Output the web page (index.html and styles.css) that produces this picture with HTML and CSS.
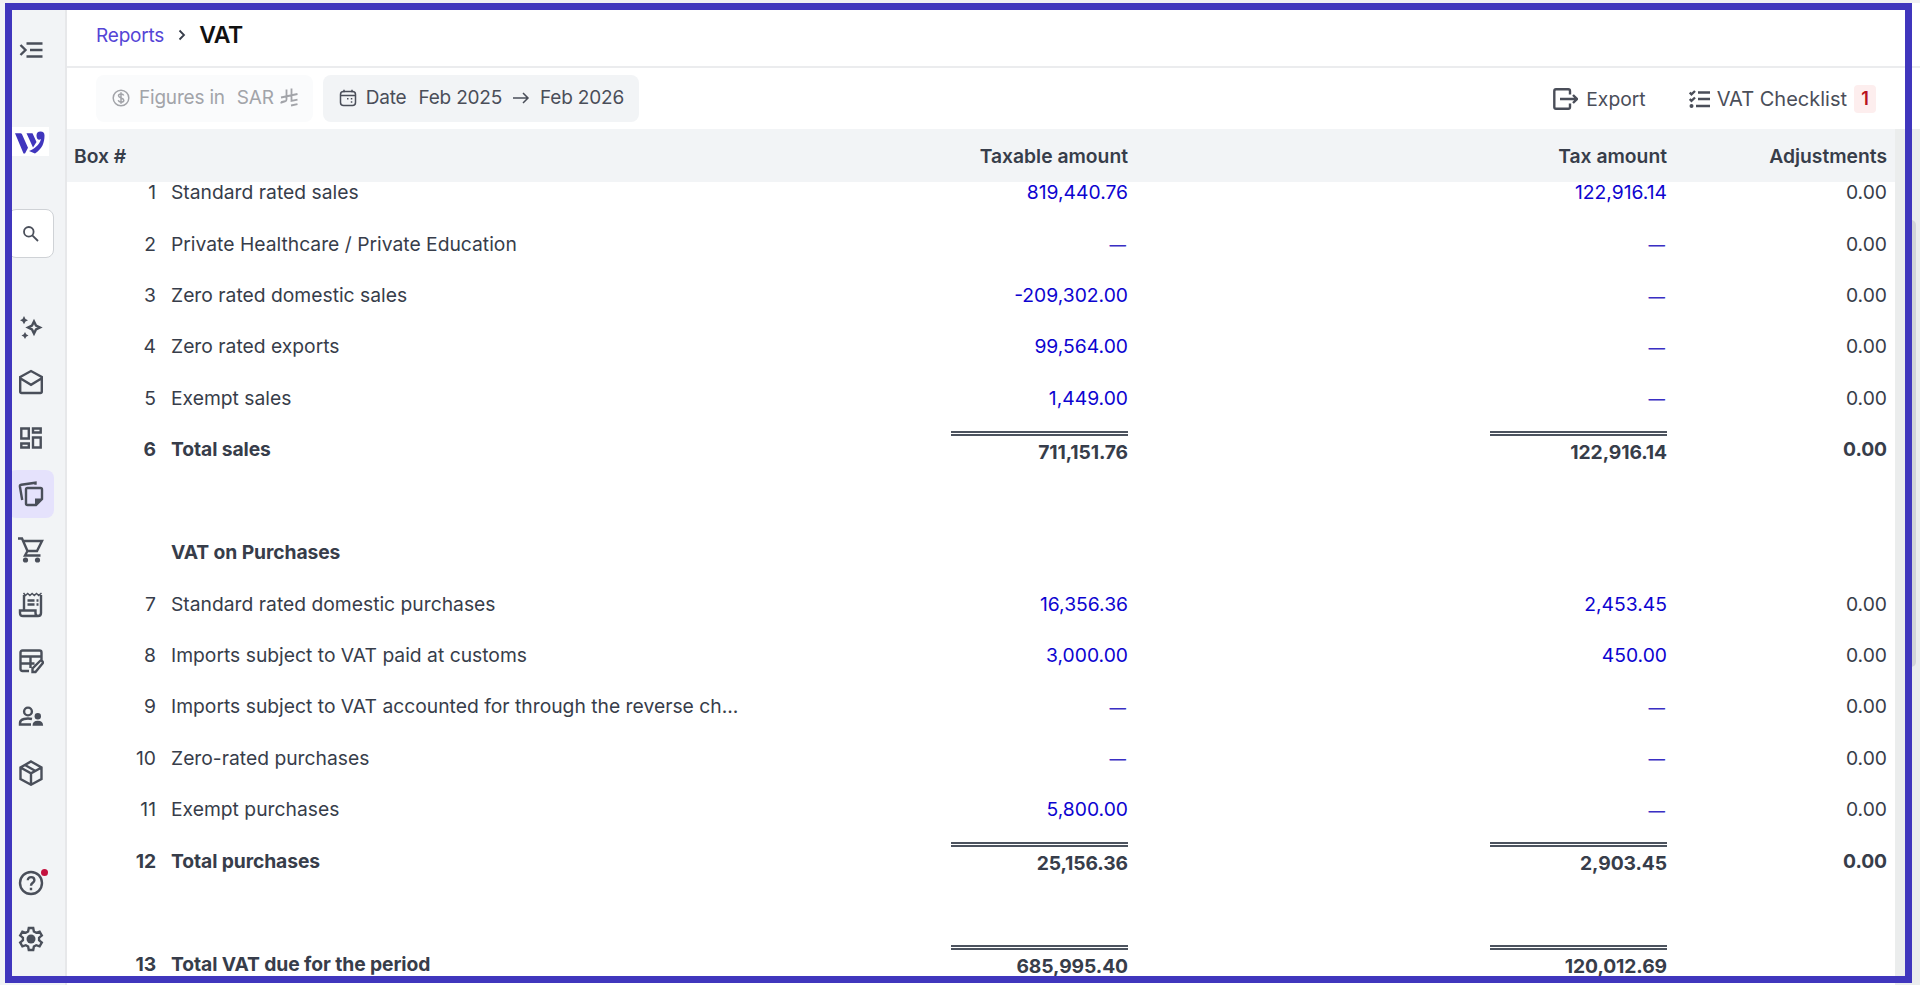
FILE: index.html
```html
<!DOCTYPE html>
<html lang="en">
<head>
  <meta charset="UTF-8">
  <title>VAT - Reports</title>
  <meta name="viewport" content="width=device-width, initial-scale=1">
  <link rel="stylesheet" href="styles.css">
</head>
<body>

  <div class="app">
    <nav class="sidebar">
      <a class="nav-item toggle">
        <svg width="24" height="24" viewBox="0 0 24 24"><path d="M1.500 7l5 5-5 5M7.500 5.500H23.500M11 12h12.500M7.500 18.500H23.500"/></svg>
      </a>
      <a class="nav-item logo">
        <svg width="30" height="23" viewBox="0 0 30 23"><path class="solid" d="M0 2.300h5.500q1 0 1.500 1l6 13.500-3 5.700H8.500zM11.500 2.300h6l4 8.700-3.500 5.500zM21.500 4.500a4 4 0 1 1 8 0C29.500 12 27 18 20 22.500L14 20c5-2 10.500-6 12-12-2 1.500-4.500.5-4.500-3.500z"/></svg>
      </a>
      <a class="nav-item search">
        <svg width="18" height="18" viewBox="0 0 18 18"><circle cx="6.800" cy="6.800" r="4.800"/><path d="M10.300 10.300l5.700 5.700"/></svg>
      </a>
      <div class="nav-main">
        <a class="nav-item">
          <svg width="24" height="24" viewBox="0 0 24 24"><path d="M15 6.500l2 4 4 2-4 2-2 4-2-4-4-2 4-2z"/><path class="solid" d="M5 1l1.500 3L9 5.200 6.500 6.500 5 9.200 3.500 6.500 1 5.200 3.500 4zM6 17l1.200 2.300 2.300 1.200-2.300 1.200L6 24l-1.200-2.300-2.300-1.200 2.300-1.200z"/></svg>
        </a>
        <a class="nav-item">
          <svg width="26" height="26" viewBox="0 0 26 26"><path d="M2.200 8L13 2l10.800 6v14.500q0 1.500-1.500 1.500h-18.600q-1.500 0-1.500-1.500zM2.200 9.300L13 15.800l10.800-6.500"/></svg>
        </a>
        <a class="nav-item">
          <svg width="24" height="24" viewBox="0 0 24 24"><path d="M2.300 2.500h7.500v10H2.300zM14 2.500h7.700v4H14zM14 11.500h7.700v10H14zM2.300 17.500h7.500v4H2.300z"/></svg>
        </a>
        <a class="nav-item active">
          <svg width="26" height="26" viewBox="0 0 26 26"><path d="M8 8.500Q8 7 9.500 7h13q1.500 0 1.500 1.500V18l-6 6H9.500Q8 24 8 22.500zM4.200 19L1.900 5.500Q1.700 4 3.200 3.700L17.500 1.700v2"/><path class="solid" d="M17 24.500v-7h7.500z"/></svg>
        </a>
        <a class="nav-item">
          <svg width="26" height="26" viewBox="0 0 26 26"><path d="M0 1.500h4l5.500 12.500h9.500l5-10H5M9.500 14L7 18.500h15.500"/><circle class="solid" cx="7.500" cy="23" r="2.600"/><circle class="solid" cx="19.500" cy="23" r="2.600"/></svg>
        </a>
        <a class="nav-item">
          <svg width="26" height="26" viewBox="0 0 26 26"><path d="M6 18V3M23 3v18q0 3-3 3H5q-3 0-3-3v-2.500h15.500V21q0 3 2.500 3M9.500 8.500h7M9.500 12.500h7M18.500 8.500h2M18.500 12.500h2"/><path stroke-width="1.500" d="M5.500 1l2 2.500 2.200-2 2.200 2 2.200-2 2.200 2 2.200-2 2.200 2 2.800-2.500"/></svg>
        </a>
        <a class="nav-item">
          <svg width="26" height="26" viewBox="0 0 26 26"><path d="M11 23H4.500q-2 0-2-2V4.500q0-2 2-2h17q2 0 2 2V12M2.500 8.500h21M2.500 15.500h14M12.500 8.500V20M14.500 24v-3.500l7.500-7.500q1-1 2.200.2t.3 2.300L17.500 24z"/></svg>
        </a>
        <a class="nav-item">
          <svg width="26" height="26" viewBox="0 0 26 26"><circle cx="10" cy="7.500" r="3.900"/><path d="M13 20.500H2V19q0-3 4-4t8 0"/><circle class="solid" cx="19.800" cy="12.300" r="3.200"/><path class="solid" d="M14.500 21.700q0-5 5.300-5t5.300 5z"/></svg>
        </a>
        <a class="nav-item">
          <svg width="26" height="26" viewBox="0 0 26 26"><path d="M13 1.500l10.500 6v11.500L13 24.700 2.500 19V7.500zM2.500 7.500L13 13.300l10.500-5.800M13 13v11.500M7 5l10.500 6"/></svg>
        </a>
      </div>
      <div class="nav-bottom">
        <a class="nav-item">
          <svg width="26" height="26" viewBox="0 0 26 26"><circle cx="13" cy="13" r="11"/><path d="M9.800 10.200c0-4.200 6.600-4 6.600 0 0 2.600-3.400 2.600-3.400 5.500M13 17.800v2.400"/></svg>
          <span class="dot"></span>
        </a>
        <a class="nav-item">
          <svg width="26" height="26" viewBox="0 0 26 26"><path d="M10.800 2h4.400l.7 3.500 2.300 1.300 3.400-1.200 2.200 3.800-2.700 2.300v2.600l2.700 2.300-2.200 3.800-3.400-1.200-2.300 1.300-.7 3.500h-4.400l-.7-3.500-2.300-1.300-3.400 1.200-2.200-3.800 2.700-2.300v-2.600L2.200 9.400l2.200-3.800 3.400 1.200 2.300-1.300z"/><circle class="solid" cx="13" cy="13" r="4.500"/></svg>
        </a>
      </div>
    </nav>

    <main>
      <header>
        <a class="crumb">Reports</a>
        <svg class="chevron" width="8" height="12" viewBox="0 0 8 12"><path d="M1.500 1.500L6 6l-4.500 4.500"/></svg>
        <h1>VAT</h1>
      </header>

      <div class="toolbar">
        <div class="chip disabled">
          <svg width="18" height="18" viewBox="0 0 18 18"><circle cx="9" cy="9" r="7.800"/><path d="M11.700 6.500C11 4.300 6.500 4.300 6.500 6.800S11.800 8.800 11.800 11.300 7 13.800 6.200 11.300M9 3.300v11.400"/></svg>
          <span>Figures in</span>
          <span class="value">SAR</span>
          <svg class="riyal" width="18" height="19" viewBox="0 0 18 19"><path d="M6.500 1.500V11.500q0 1.500-1.500 2L.5 15M11.500.5v12.500L17.500 11.700M1 9.500L17.500 6M1 14l4-1M11 17.500l6.500-1.400"/></svg>
        </div>
        <div class="chip">
          <svg width="18" height="18" viewBox="0 0 18 18"><rect x="1.500" y="2.500" width="15" height="14" rx="3"/><path d="M1.500 6.500h15M5 .8v2.500M13 .8v2.500"/><path class="solid" d="M8 9h1.500v1.500H8zM11.800 9h1.500v1.500h-1.500zM11.800 12.300h1.500v1.500h-1.500z"/></svg>
          <span>Date</span>
          <span class="value">Feb 2025</span>
          <svg class="arrow" width="18" height="14" viewBox="0 0 18 14"><path d="M1 7h15M11 2l5 5-5 5"/></svg>
          <span>Feb 2026</span>
        </div>
        <div class="actions">
          <a class="export">
            <svg width="25" height="22" viewBox="0 0 25 22"><path d="M17 6.500V3q0-1.700-1.700-1.700H3Q1.300 1.300 1.300 3v16q0 1.700 1.700 1.700h12.300q1.700 0 1.700-1.700v-3.500M7 11h16.500M20 7l4 4-4 4"/></svg>
            Export
          </a>
          <a class="checklist">
            <svg width="21" height="18" viewBox="0 0 21 18"><path d="M9 2.500h12M9 9h12M7 16h14M.7 2.500l1.800 1.800L6 1M.7 9l1.800 1.800L6 7.500"/><circle class="solid" cx="2.500" cy="16" r="2"/></svg>
            VAT Checklist
            <span class="badge">1</span>
          </a>
        </div>
      </div>

      <div class="report">
        <div class="table">
          <div class="row head">
            <span class="box">Box #</span><span class="name"></span><span class="amount">Taxable amount</span><span class="amount">Tax amount</span><span class="adj">Adjustments</span>
          </div>
          <div class="rows">
            <div class="row"><span class="box">1</span><span class="name">Standard rated sales</span><a class="amount">819,440.76</a><a class="amount">122,916.14</a><span class="adj">0.00</span></div>
            <div class="row"><span class="box">2</span><span class="name">Private Healthcare / Private Education</span><a class="amount nil">—</a><a class="amount nil">—</a><span class="adj">0.00</span></div>
            <div class="row"><span class="box">3</span><span class="name">Zero rated domestic sales</span><a class="amount">-209,302.00</a><a class="amount nil">—</a><span class="adj">0.00</span></div>
            <div class="row"><span class="box">4</span><span class="name">Zero rated exports</span><a class="amount">99,564.00</a><a class="amount nil">—</a><span class="adj">0.00</span></div>
            <div class="row"><span class="box">5</span><span class="name">Exempt sales</span><a class="amount">1,449.00</a><a class="amount nil">—</a><span class="adj">0.00</span></div>
            <div class="row total"><span class="box">6</span><span class="name">Total sales</span><span class="amount"><b>711,151.76</b></span><span class="amount"><b>122,916.14</b></span><span class="adj">0.00</span></div>
            <div class="row"></div>
            <div class="row total"><span class="box"></span><span class="name">VAT on Purchases</span></div>
            <div class="row"><span class="box">7</span><span class="name">Standard rated domestic purchases</span><a class="amount">16,356.36</a><a class="amount">2,453.45</a><span class="adj">0.00</span></div>
            <div class="row"><span class="box">8</span><span class="name">Imports subject to VAT paid at customs</span><a class="amount">3,000.00</a><a class="amount">450.00</a><span class="adj">0.00</span></div>
            <div class="row"><span class="box">9</span><span class="name">Imports subject to VAT accounted for through the reverse ch...</span><a class="amount nil">—</a><a class="amount nil">—</a><span class="adj">0.00</span></div>
            <div class="row"><span class="box">10</span><span class="name">Zero-rated purchases</span><a class="amount nil">—</a><a class="amount nil">—</a><span class="adj">0.00</span></div>
            <div class="row"><span class="box">11</span><span class="name">Exempt purchases</span><a class="amount">5,800.00</a><a class="amount nil">—</a><span class="adj">0.00</span></div>
            <div class="row total"><span class="box">12</span><span class="name">Total purchases</span><span class="amount"><b>25,156.36</b></span><span class="amount"><b>2,903.45</b></span><span class="adj">0.00</span></div>
            <div class="row"></div>
            <div class="row total"><span class="box">13</span><span class="name">Total VAT due for the period</span><span class="amount"><b>685,995.40</b></span><span class="amount"><b>120,012.69</b></span><span class="adj"></span></div>
          </div>
        </div>
        <div class="scrollbar"><div class="thumb"></div></div>
      </div>
    </main>
  </div>

  <div class="frame"></div>

</body>
</html>
```
FILE: styles.css
```css
* {
  box-sizing: border-box;
}

body {
  margin: 0;
  height: 985px;
  overflow: hidden;
  font-family: Inter, "Liberation Sans", sans-serif;
  font-size: 19.3px;
  color: #373d4a;
  background: #fff;
}

svg {
  flex: none;
  fill: none;
  stroke: currentColor;
  stroke-width: 2.4;
}

svg .solid {
  fill: currentColor;
  stroke: none;
}

.app {
  display: flex;
  height: 985px;
  border-top: 3px solid #f1f1f2;
}

/* sidebar */
.sidebar {
  width: 67px;
  flex: none;
  padding-left: 8px;
  background: #f2f4f6;
  border-right: 2px solid #e7e8ea;
  color: #4a4f5a;
  display: flex;
  flex-direction: column;
}

.nav-item {
  position: relative;
  width: 46px;
  height: 48px;
  display: flex;
  align-items: center;
  justify-content: center;
  border-radius: 8px;
}

.toggle {
  width: 45px;
  margin-top: 23px;
}

.logo {
  height: 29px;
  width: 41px;
  margin-top: 53px;
  padding: 2px 0 0 2px;
  background: #fff;
  border-radius: 0;
  color: #4036bd;
}

.search {
  height: 49px;
  margin-top: 53px;
  background: #fff;
  border: 1px solid #cfd2d6;
}

.search svg {
  stroke-width: 1.8;
}

.nav-main {
  margin-top: 44.5px;
  display: flex;
  flex-direction: column;
  gap: 7.8px;
}

.nav-bottom {
  margin-top: 62px;
  display: flex;
  flex-direction: column;
  gap: 8px;
}

.active {
  background: #e5e2fc;
}

.dot {
  position: absolute;
  top: 10px;
  right: 6px;
  width: 7px;
  height: 7px;
  border-radius: 50%;
  background: #c4123f;
}

main {
  flex: 1;
  min-width: 0;
  display: flex;
  flex-direction: column;
}

/* breadcrumb */
header {
  height: 65px;
  display: flex;
  align-items: center;
  padding-left: 29px;
  border-bottom: 2px solid #ebecee;
}

.crumb {
  padding-top: 1px;
  font-size: 19px;
  letter-spacing: -0.2px;
  color: #5545d6;
}

.chevron {
  margin: 0 13px 0 14px;
  stroke-width: 1.8;
}

h1 {
  margin: 0;
  font-size: 23px;
  font-weight: 600;
  letter-spacing: -0.4px;
  color: #111;
}

/* filters */
.toolbar {
  height: 61px;
  display: flex;
  align-items: center;
  gap: 10px;
  padding-left: 29px;
  color: #4a4e59;
}

.chip {
  height: 47px;
  padding: 0 15px 2px 16px;
  display: flex;
  align-items: center;
  border-radius: 8px;
  background: #f2f4f6;
  font-size: 19px;
  letter-spacing: -0.2px;
}

.chip svg {
  stroke-width: 1.5;
}

.chip span {
  margin-left: 9px;
}

.chip .value {
  margin-left: 12px;
}

.chip .riyal {
  margin-left: 6px;
  stroke-width: 1.8;
}

.chip .arrow {
  margin: 0 1px 0 10px;
}

.disabled {
  background: #fafbfc;
  color: #a2a4a9;
}

.actions {
  margin-left: auto;
  margin-right: 44px;
  display: flex;
  gap: 43px;
}

.actions a {
  display: flex;
  align-items: center;
  gap: 7px;
}

.actions .export {
  gap: 8px;
}

.actions .checklist {
  font-size: 20px;
}

.badge {
  width: 22px;
  height: 28px;
  line-height: 28px;
  text-align: center;
  border-radius: 4px;
  background: #fdeeee;
  color: #b81220;
  font-size: 18px;
  font-weight: 600;
}

/* report table */
.report {
  flex: 1;
  min-height: 0;
  display: flex;
}

.table {
  flex: 1;
  overflow: hidden;
}

.row {
  height: 51.43px;
  display: grid;
  grid-template-columns: 89px 783px 189px 539px 220px;
  align-items: center;
  white-space: nowrap;
}

.row .box {
  text-align: right;
}

.row .name {
  padding-left: 15px;
}

.row .amount,
.row .adj {
  text-align: right;
}

.rows {
  margin-top: -15.5px;
}

a.amount {
  color: #0d04d0;
}

.row .nil {
  padding: 3px 2px 0 0;
  font-size: 16.5px;
  font-weight: 500;
  color: #3a2fc4;
}

.head {
  position: relative;
  height: 53px;
  background: #f2f4f6;
  font-weight: 580;
}

.head .box {
  text-align: left;
  padding-left: 7px;
}

.total {
  font-weight: 680;
  letter-spacing: -0.1px;
}

.total .amount {
  align-self: start;
  padding-top: 7px;
}

/* double rule over each total */
.total b {
  display: block;
  width: 177px;
  margin-left: auto;
  padding-top: 4px;
  line-height: 24px;
  font-weight: inherit;
  border-top: 5px double #4c535e;
}

.scrollbar {
  width: 25px;
  background: #ebeded;
}

.thumb {
  width: 10px;
  height: 447px;
  margin: 91px 0 0 11px;
  border-radius: 5px;
  background: #d2d4d8;
}

/* outline drawn over the whole window */
.frame {
  position: absolute;
  top: 3px;
  left: 5px;
  width: 1907px;
  height: 980px;
  border: 7px solid #4036bd;
  pointer-events: none;
}
```
